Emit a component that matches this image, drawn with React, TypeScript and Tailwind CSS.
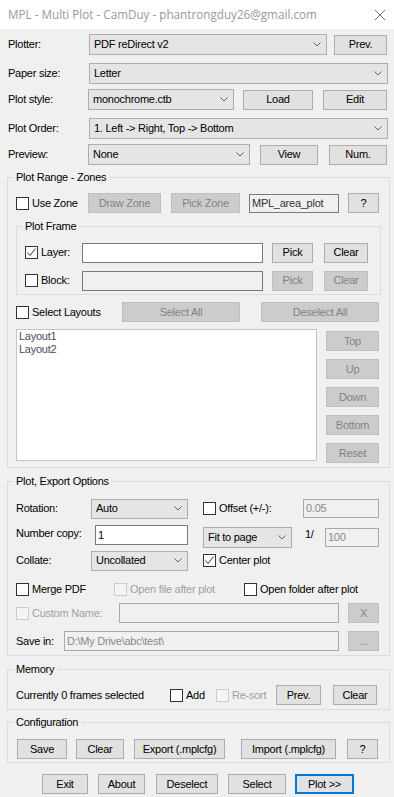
import React from "react";

const cx = (...a: (string | false | undefined | null)[]) => a.filter(Boolean).join(" ");

function Btn({ className, disabled, children }: { className?: string; disabled?: boolean; children: React.ReactNode }) {
  return (
    <div
      className={cx(
        "flex h-[20px] shrink-0 items-center justify-center whitespace-nowrap border",
        disabled ? "border-[#bfbfbf] bg-[#cccccc] text-[#838383]" : "border-[#adadad] bg-[#e1e1e1] text-black",
        className
      )}
    >
      {children}
    </div>
  );
}

function Chevron() {
  return (
    <svg width="8" height="5" viewBox="0 0 8 5" className="shrink-0">
      <polyline points="0.5,0.5 4,4 7.5,0.5" fill="none" stroke="#606060" strokeWidth="1" />
    </svg>
  );
}

function Combo({ className, children }: { className?: string; children: React.ReactNode }) {
  return (
    <div
      className={cx(
        "flex shrink-0 items-center justify-between whitespace-nowrap border border-[#adadad] bg-[#e5e5e5] pl-[4px] pr-[5px]",
        className
      )}
    >
      <span>{children}</span>
      <Chevron />
    </div>
  );
}

function TextBox({
  className,
  disabled,
  readOnly,
  children,
}: {
  className?: string;
  disabled?: boolean;
  readOnly?: boolean;
  children?: React.ReactNode;
}) {
  return (
    <div
      className={cx(
        "flex shrink-0 items-center whitespace-nowrap border pl-[2px]",
        disabled
          ? "border-[#a8a8a8] bg-[#f0f0f0] text-[#8a8a8a]"
          : readOnly
          ? "border-[#7a7a7a] bg-[#f0f0f0] text-[#333333]"
          : "border-[#7a7a7a] bg-white text-black",
        className
      )}
    >
      {children}
    </div>
  );
}

function Check({ checked, disabled }: { checked?: boolean; disabled?: boolean }) {
  return (
    <span
      className={cx(
        "flex h-[13px] w-[13px] shrink-0 items-center justify-center border",
        disabled ? "border-[#cccccc] bg-[#f4f4f4]" : "border-[#333333] bg-white"
      )}
    >
      {checked && (
        <svg width="11" height="11" viewBox="0 0 11 11">
          <polyline points="1.5,5.5 4,8.5 9.5,1.5" fill="none" stroke="#333333" strokeWidth="1" />
        </svg>
      )}
    </span>
  );
}

function CheckLabel({
  checked,
  disabled,
  label,
  className,
}: {
  checked?: boolean;
  disabled?: boolean;
  label: string;
  className?: string;
}) {
  return (
    <div className={cx("flex shrink-0 items-center whitespace-nowrap", className)}>
      <Check checked={checked} disabled={disabled} />
      <span className={cx("ml-[3px]", disabled ? "text-[#a0a0a0]" : "text-black")}>{label}</span>
    </div>
  );
}

function Group({ title, className, children }: { title: string; className?: string; children: React.ReactNode }) {
  return (
    <fieldset className={cx("shrink-0 border border-[#dcdcdc]", className)}>
      <legend className="ml-[5px] px-[3px] leading-[14px]">{title}</legend>
      {children}
    </fieldset>
  );
}

export default function App() {
  return (
    <div className="flex h-[797px] w-[394px] flex-col overflow-hidden bg-[#f0f0f0] font-['Liberation_Sans',Arial,sans-serif] text-[11px] leading-[13px] tracking-[-0.25px] text-black">
      {/* Title bar */}
      <div className="flex h-[29px] shrink-0 items-center bg-white pl-[8px] font-['Open_Sans',sans-serif] text-[11.7px] tracking-normal text-[#999999]">
        <span>MPL - Multi Plot - CamDuy - phantrongduy26@gmail.com</span>
        <svg width="12" height="12" viewBox="0 0 12 12" className="ml-auto mr-[8px]">
          <path d="M1 1 L11 11 M11 1 L1 11" stroke="#707070" strokeWidth="1" fill="none" />
        </svg>
      </div>

      {/* Plotter */}
      <div className="mt-[5px] flex h-[21px] shrink-0 items-center">
        <span className="ml-[8px] w-[81px]">Plotter:</span>
        <Combo className="h-[21px] w-[238px]">PDF reDirect v2</Combo>
        <Btn className="ml-[7px] w-[53px]">Prev.</Btn>
      </div>

      {/* Paper size */}
      <div className="mt-[8px] flex h-[21px] shrink-0 items-center">
        <span className="ml-[8px] w-[81px]">Paper size:</span>
        <Combo className="h-[21px] w-[299px]">Letter</Combo>
      </div>

      {/* Plot style */}
      <div className="mt-[5px] flex h-[21px] shrink-0 items-center">
        <span className="ml-[8px] w-[80px]">Plot style:</span>
        <Combo className="h-[21px] w-[146px]">monochrome.ctb</Combo>
        <Btn className="ml-[9px] w-[70px]">Load</Btn>
        <Btn className="ml-[10px] w-[64px]">Edit</Btn>
      </div>

      {/* Plot order */}
      <div className="mt-[8px] flex h-[21px] shrink-0 items-center">
        <span className="ml-[8px] w-[81px]">Plot Order:</span>
        <Combo className="h-[21px] w-[299px]">1. Left -&gt; Right, Top -&gt; Bottom</Combo>
      </div>

      {/* Preview */}
      <div className="mt-[5px] flex h-[21px] shrink-0 items-center">
        <span className="ml-[8px] w-[80px]">Preview:</span>
        <Combo className="h-[21px] w-[162px]">None</Combo>
        <Btn className="ml-[10px] w-[58px]">View</Btn>
        <Btn className="ml-[11px] w-[58px]">Num.</Btn>
      </div>

      {/* Plot Range - Zones */}
      <Group title="Plot Range - Zones" className="ml-[7px] mt-[5px] w-[383px] pb-[4px]">
        <div className="mt-[9px] flex h-[20px] items-center">
          <CheckLabel label="Use Zone" className="ml-[8px] w-[72px]" />
          <Btn disabled className="w-[73px]">Draw Zone</Btn>
          <Btn disabled className="ml-[10px] w-[69px]">Pick Zone</Btn>
          <TextBox readOnly className="ml-[9px] h-[19px] w-[90px]">MPL_area_plot</TextBox>
          <Btn className="ml-[9px] w-[31px]">?</Btn>
        </div>

        <Group title="Plot Frame" className="ml-[8px] mt-[6px] w-[365px] pb-[3px]">
          <div className="mt-[9px] flex h-[21px] items-center">
            <CheckLabel checked label="Layer:" className="ml-[8px] w-[57px]" />
            <TextBox className="h-[20px] w-[181px]" />
            <Btn className="ml-[9px] w-[41px]">Pick</Btn>
            <Btn className="ml-[11px] w-[44px]">Clear</Btn>
          </div>
          <div className="mt-[7px] flex h-[21px] items-center">
            <CheckLabel label="Block:" className="ml-[8px] w-[57px]" />
            <TextBox readOnly className="h-[20px] w-[181px]" />
            <Btn disabled className="ml-[9px] w-[41px]">Pick</Btn>
            <Btn disabled className="ml-[11px] w-[44px]">Clear</Btn>
          </div>
        </Group>

        <div className="mt-[7px] flex h-[20px] items-center">
          <CheckLabel label="Select Layouts" className="ml-[8px] w-[106px]" />
          <Btn disabled className="w-[118px]">Select All</Btn>
          <Btn disabled className="ml-[21px] w-[118px]">Deselect All</Btn>
        </div>

        <div className="mt-[7px] flex items-start">
          <div className="ml-[8px] h-[132px] w-[301px] shrink-0 border border-[#c4c4c4] bg-white pl-[2px] text-[#4a4a5a]">
            <div>Layout1</div>
            <div>Layout2</div>
          </div>
          <div className="ml-[9px] mt-[2px] flex flex-col gap-[8px]">
            <Btn disabled className="w-[53px]">Top</Btn>
            <Btn disabled className="w-[53px]">Up</Btn>
            <Btn disabled className="w-[53px]">Down</Btn>
            <Btn disabled className="w-[53px]">Bottom</Btn>
            <Btn disabled className="w-[53px]">Reset</Btn>
          </div>
        </div>
      </Group>

      {/* Plot, Export Options */}
      <Group title="Plot, Export Options" className="ml-[7px] mt-[6px] w-[383px] pb-[4px]">
        <div className="mt-[10px] flex h-[21px] items-center">
          <span className="ml-[8px] w-[75px]">Rotation:</span>
          <Combo className="h-[20px] w-[97px]">Auto</Combo>
          <CheckLabel label="Offset (+/-):" className="ml-[15px] w-[100px]" />
          <TextBox disabled className="h-[19px] w-[76px]">0.05</TextBox>
        </div>

        <div className="mt-[6px] flex h-[22px] items-start">
          <span className="ml-[8px] mt-[2px] w-[79px]">Number copy:</span>
          <TextBox className="h-[20px] w-[93px]">1</TextBox>
          <Combo className="ml-[15px] mt-[2px] h-[21px] w-[89px]">Fit to page</Combo>
          <span className="ml-[13px] mt-[3px] w-[20px]">1/</span>
          <TextBox disabled className="mt-[3px] h-[19px] w-[54px]">100</TextBox>
        </div>

        <div className="mt-[3px] flex h-[21px] items-center">
          <span className="ml-[8px] w-[75px]">Collate:</span>
          <Combo className="h-[20px] w-[97px]">Uncollated</Combo>
          <CheckLabel checked label="Center plot" className="ml-[15px]" />
        </div>

        <div className="mt-[12px] flex h-[13px] items-center">
          <CheckLabel label="Merge PDF" className="ml-[8px] w-[98px]" />
          <CheckLabel disabled label="Open file after plot" className="w-[130px]" />
          <CheckLabel label="Open folder after plot" />
        </div>

        <div className="mt-[7px] flex h-[20px] items-center">
          <CheckLabel disabled label="Custom Name:" className="ml-[8px] w-[103px]" />
          <TextBox disabled className="h-[20px] w-[220px]" />
          <Btn disabled className="ml-[9px] w-[31px]">X</Btn>
        </div>

        <div className="mt-[8px] flex h-[20px] items-center">
          <span className="ml-[8px] w-[48px]">Save in:</span>
          <TextBox disabled className="h-[20px] w-[275px]">D:\My Drive\abc\test\</TextBox>
          <Btn disabled className="ml-[9px] w-[31px]">...</Btn>
        </div>
      </Group>

      {/* Memory */}
      <Group title="Memory" className="ml-[7px] mt-[6px] w-[383px] pb-[4px]">
        <div className="mt-[9px] flex h-[20px] items-center">
          <span className="ml-[8px] w-[154px] whitespace-nowrap">Currently 0 frames selected</span>
          <CheckLabel label="Add" className="w-[46px]" />
          <CheckLabel disabled label="Re-sort" className="w-[60px]" />
          <Btn className="w-[45px]">Prev.</Btn>
          <Btn className="ml-[12px] w-[44px]">Clear</Btn>
        </div>
      </Group>

      {/* Configuration */}
      <Group title="Configuration" className="ml-[7px] mt-[5px] w-[383px] pb-[3px]">
        <div className="mt-[10px] flex h-[20px] items-center">
          <Btn className="ml-[9px] w-[50px]">Save</Btn>
          <Btn className="ml-[9px] w-[48px]">Clear</Btn>
          <Btn className="ml-[10px] w-[91px]">Export (.mplcfg)</Btn>
          <Btn className="ml-[16px] w-[95px]">Import (.mplcfg)</Btn>
          <Btn className="ml-[11px] w-[31px]">?</Btn>
        </div>
      </Group>

      {/* Bottom buttons */}
      <div className="mt-[11px] flex h-[20px] shrink-0 items-center">
        <Btn className="ml-[42px] w-[46px]">Exit</Btn>
        <Btn className="ml-[10px] w-[47px]">About</Btn>
        <Btn className="ml-[11px] w-[62px]">Deselect</Btn>
        <Btn className="ml-[10px] w-[58px]">Select</Btn>
        <div className="ml-[9px] flex h-[20px] w-[59px] shrink-0 items-center justify-center whitespace-nowrap border-2 border-[#0078d7] bg-[#e1e1e1]">
          Plot &gt;&gt;
        </div>
      </div>
    </div>
  );
}
